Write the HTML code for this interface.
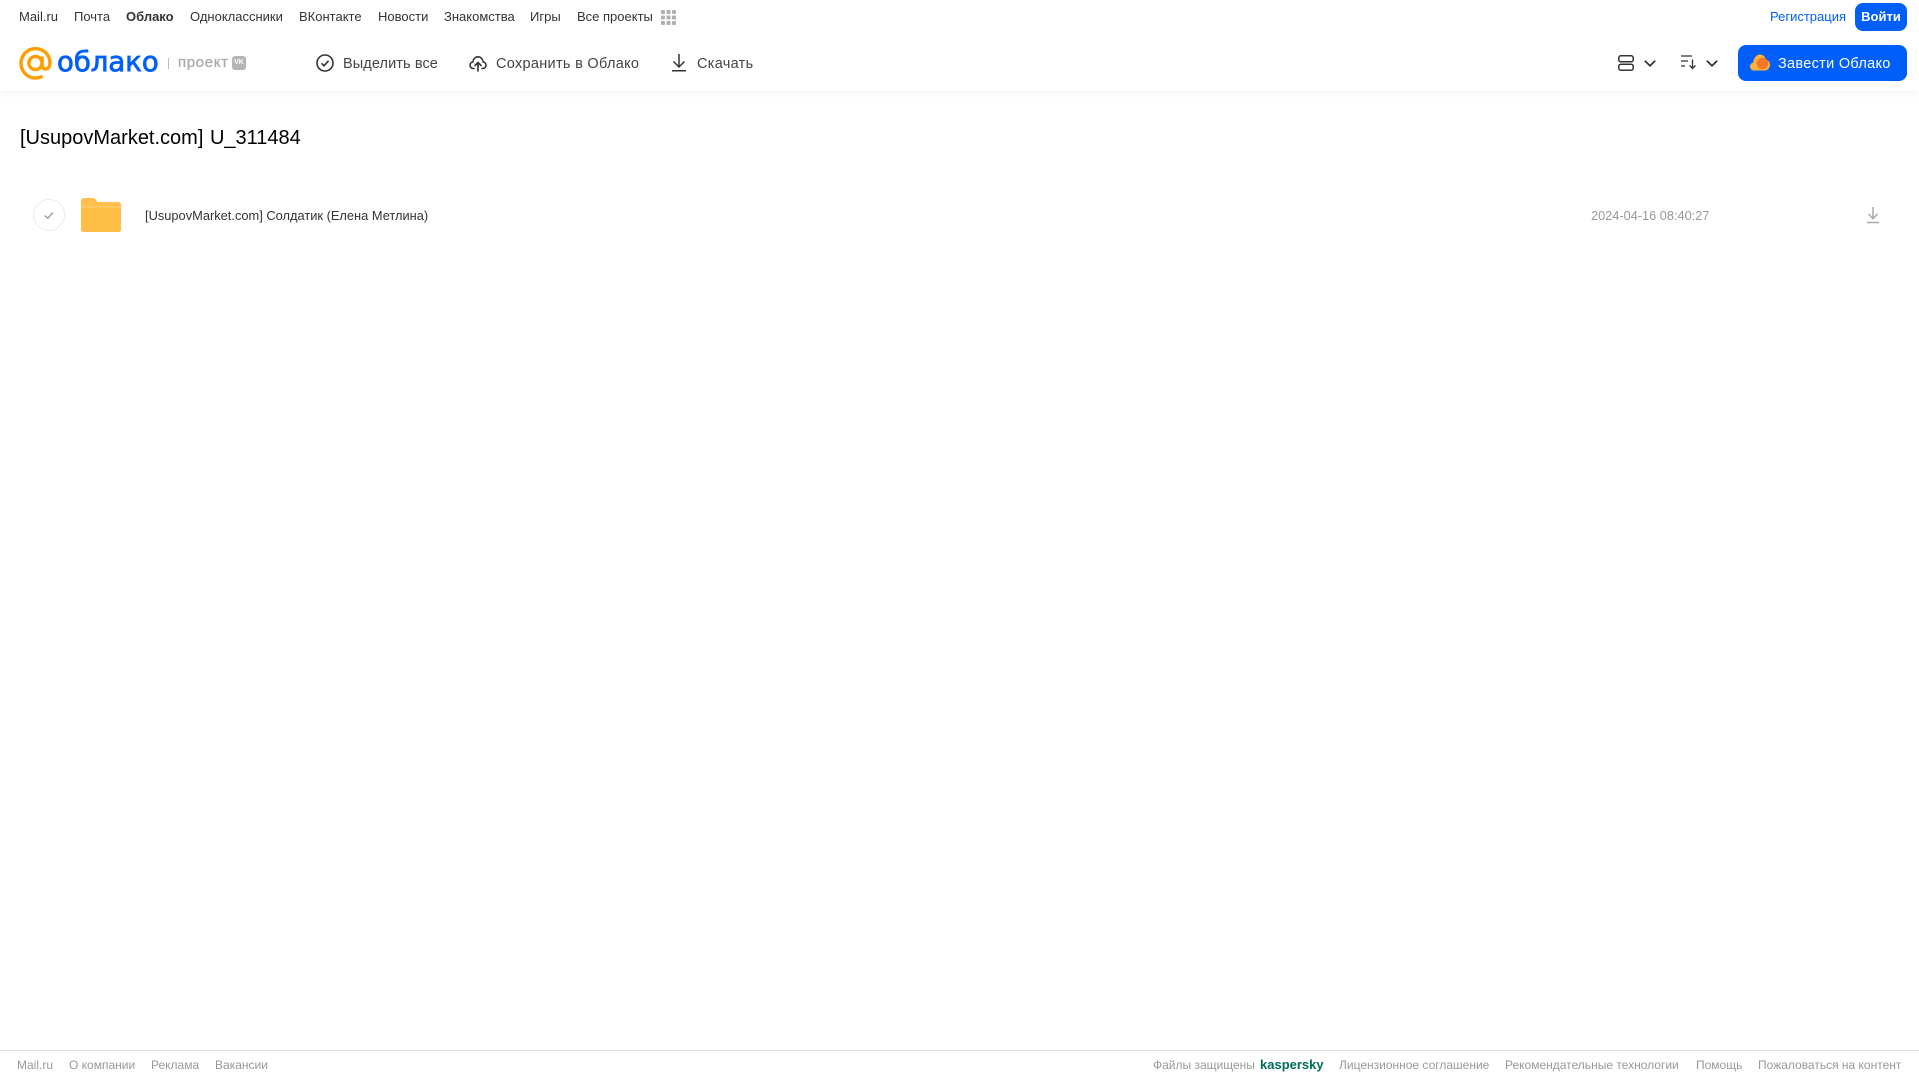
<!DOCTYPE html>
<html lang="ru"><head><meta charset="utf-8"><title>Облако</title>
<style>
html,body{margin:0;padding:0;background:#fff}
body{width:1919px;height:1079px;position:relative;overflow:hidden;font-family:"Liberation Sans",Arial,sans-serif}
.t{position:absolute;white-space:nowrap;text-decoration:none;line-height:20px}
.n{font-size:13px;color:#333;top:7px}
.b{font-size:14.5px;color:#444;top:54px;letter-spacing:.3px}
.f{font-size:12px;color:#999;top:1055px}
svg{position:absolute;display:block}
#hd{position:absolute;left:0;top:0;width:1919px;height:91px;background:#fff;box-shadow:0 1px 8px rgba(0,0,0,.07)}
</style></head><body>
<div id="hd"></div>
<a class="t n" style="left:19px">Mail.ru</a>
<a class="t n" style="left:74px">Почта</a>
<a class="t n" style="left:126px;font-weight:bold">Облако</a>
<a class="t n" style="left:190px">Одноклассники</a>
<a class="t n" style="left:299px">ВКонтакте</a>
<a class="t n" style="left:378px">Новости</a>
<a class="t n" style="left:444px">Знакомства</a>
<a class="t n" style="left:530px">Игры</a>
<a class="t n" style="left:577px">Все проекты</a>
<svg style="left:661px;top:10px" width="15" height="15" fill="#b0b0b0"><rect x="0" y="0" width="4" height="4" rx="1"/><rect x="5.5" y="0" width="4" height="4" rx="1"/><rect x="11" y="0" width="4" height="4" rx="1"/><rect x="0" y="5.5" width="4" height="4" rx="1"/><rect x="5.5" y="5.5" width="4" height="4" rx="1"/><rect x="11" y="5.5" width="4" height="4" rx="1"/><rect x="0" y="11" width="4" height="4" rx="1"/><rect x="5.5" y="11" width="4" height="4" rx="1"/><rect x="11" y="11" width="4" height="4" rx="1"/></svg>
<a class="t n" style="left:1770px;color:#005ff9">Регистрация</a>
<div class="t" style="left:1855px;top:3px;width:52px;height:28px;line-height:28px;background:#005ff9;border-radius:8px;color:#fff;font-size:13px;font-weight:bold;text-align:center">Войти</div>

<svg style="left:19px;top:47px" width="33" height="33" viewBox="0 0 33 33" fill="none" stroke="#ff9e00" stroke-width="3.4"><circle cx="16.500" cy="16" r="6.600"/><path d="M23.100 9.500v8.500c0 2.600 1.700 4 3.400 4 2.200 0 4.500-2 4.500-6 0-8.200-6.500-14.300-14.500-14.300S2 8 2 16.300s6.500 14.700 14.500 14.700c2.800 0 5-.6 7-1.800"/></svg>
<div class="t" style="left:57px;top:44px;font-family:'DejaVu Sans',sans-serif;font-size:27.500px;line-height:36px;color:#005ff9;-webkit-text-stroke:.8px #005ff9">облако</div>
<div style="position:absolute;left:168px;top:58px;width:1px;height:11px;background:#bbb"></div>
<div class="t" style="left:178px;top:52.500px;font-size:15px;color:#aaa;letter-spacing:.65px;-webkit-text-stroke:.3px #aaa">проект</div>
<div style="position:absolute;left:232px;top:56px;width:14px;height:14px;border-radius:3px;background:#b5b5b5;color:#fff;font:bold 7px/14px 'Liberation Sans',sans-serif;text-align:center">VK</div>

<svg style="left:316px;top:54px" width="18" height="18" viewBox="0 0 18 18" fill="none" stroke="#333" stroke-width="1.600"><circle cx="9" cy="9" r="8"/><path d="M5.500 9.300l2.500 2.500 4.500-5"/></svg>
<a class="t b" style="left:343px;letter-spacing:.1px">Выделить все</a>
<svg style="left:469px;top:54px" width="18" height="18" viewBox="0 0 18 18" fill="none" stroke="#333" stroke-width="1.600" stroke-linecap="round" stroke-linejoin="round"><path d="M5 14.500H4.300C2.400 14.500 1 13 1 11.200c0-1.600 1.100-3 2.800-3.200C4.200 5 6.300 2.800 9 2.800s4.800 2.200 5.200 5.200c1.700.2 2.800 1.600 2.800 3.200 0 1.800-1.400 3.300-3.300 3.300H13"/><path d="M9 17V9M6 11.500L9 8.500l3 3"/></svg>
<a class="t b" style="left:496px">Сохранить в Облако</a>
<svg style="left:672px;top:54px" width="14" height="18" viewBox="0 0 14 18" fill="none" stroke="#333" stroke-width="1.500"><path d="M7 0v12.500M1.500 7.500L7 13l5.500-5.500M0 16.800h14"/></svg>
<a class="t b" style="left:697px">Скачать</a>

<svg style="left:1618px;top:55px" width="16" height="16" viewBox="0 0 16 16" fill="none" stroke="#333" stroke-width="1.500"><rect x=".8" y=".8" width="14.400" height="6" rx="2"/><rect x=".8" y="9.200" width="14.400" height="6" rx="2"/></svg>
<svg style="left:1644px;top:60px" width="12" height="7" viewBox="0 0 12 7" fill="none" stroke="#333" stroke-width="1.700"><path d="M.8.800L6 5.800 11.200.800"/></svg>
<svg style="left:1681px;top:55px" width="16" height="15" viewBox="0 0 16 15" fill="none" stroke="#333" stroke-width="1.300"><path d="M0 1h11M0 6h7M0 11h4M11.500 4.500V13.500M8.500 10.500l3 3 3-3"/></svg>
<svg style="left:1706px;top:60px" width="12" height="7" viewBox="0 0 12 7" fill="none" stroke="#333" stroke-width="1.700"><path d="M.8.800L6 5.800 11.200.800"/></svg>

<div style="position:absolute;left:1738px;top:45px;width:169px;height:36px;background:#005ff9;border-radius:8px"></div>
<svg style="left:1750px;top:54px" width="20" height="17" viewBox="0 0 20 17"><path d="M4 16.500C1.800 16.500 0 14.800 0 12.500c0-2 1.400-3.600 3.300-4C3.800 3.800 6.500.5 10 .5c3 0 5.300 2.300 6 5.300 2.300.4 4 2.400 4 5 0 3.200-2.300 5.700-5 5.700z" fill="#ffb13d"/><circle cx="12.500" cy="9.500" r="5.800" fill="#f4762a"/></svg>
<a class="t" style="left:1778px;top:54px;font-size:14.500px;color:#fff;letter-spacing:.3px">Завести Облако</a>

<h1 class="t" style="margin:0;left:20px;top:125px;font-size:20px;line-height:26px;font-weight:normal;color:#000;word-spacing:1px">[UsupovMarket.com] U_311484</h1>

<svg style="left:32px;top:198px" width="34" height="34" viewBox="0 0 34 34" fill="none"><circle cx="17" cy="17" r="15.500" stroke="#ececec" stroke-width="1"/><path d="M12.800 17.500l3 2.800 5-5.800" stroke="#999" stroke-width="1.400"/></svg>
<svg style="left:81px;top:198px" width="40" height="34" viewBox="0 0 40 34"><path d="M0 3C0 1.300 1.300 0 3 0h9c1.500 0 2.500.7 3.500 2.500l.7 1.500H37c1.700 0 3 1.300 3 3v24c0 1.700-1.300 3-3 3H3c-1.700 0-3-1.300-3-3z" fill="#ffc04d"/><rect x="0" y="8" width="40" height="26" rx="2.500" fill="#ffbe45"/><path d="M0 8h40v2H0z" fill="#ffd27e" opacity=".5"/></svg>
<div class="t" style="left:145px;top:206px;font-size:12.850px;color:#333">[UsupovMarket.com] Солдатик (Елена Метлина)</div>
<div class="t" style="left:1591px;top:206px;font-size:12.750px;color:#999">2024-04-16 08:40:27</div>
<svg style="left:1866px;top:206px" width="14" height="18" viewBox="0 0 14 18" fill="none" stroke="#aaa" stroke-width="1.500"><path d="M7 1v11.500M2.500 8L7 12.700 11.500 8M1 16.500h12"/></svg>

<div style="position:absolute;left:0;top:1050px;width:1919px;height:1px;background:#ddd"></div>
<a class="t f" style="left:17px">Mail.ru</a>
<a class="t f" style="left:69px">О компании</a>
<a class="t f" style="left:151px">Реклама</a>
<a class="t f" style="left:215px">Вакансии</a>
<span class="t f" style="left:1153px">Файлы защищены</span>
<span class="t f" style="left:1260px;color:#006d5c;font-weight:bold;font-size:13px">kaspersky</span>
<a class="t f" style="left:1339px">Лицензионное соглашение</a>
<a class="t f" style="left:1505px">Рекомендательные технологии</a>
<a class="t f" style="left:1696px">Помощь</a>
<a class="t f" style="left:1758px">Пожаловаться на контент</a>
</body></html>
